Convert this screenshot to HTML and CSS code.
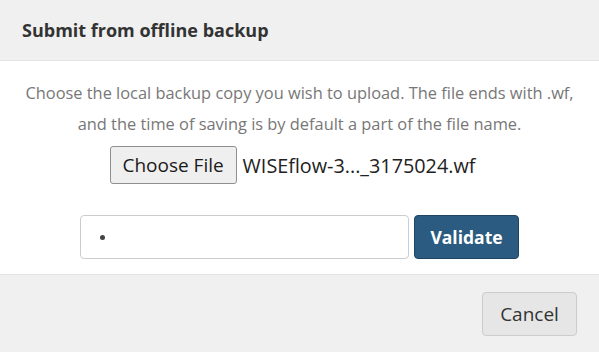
FILE: index.html
```html
<!DOCTYPE html>
<html>
<head>
<meta charset="utf-8">
<link rel="stylesheet" href="styles.css">
</head>
<body>
<div class="modal">
  <div class="modal-header">
    <h4 class="modal-title">Submit from offline backup</h4>
  </div>
  <div class="modal-body">
    <p class="intro">Choose the local backup copy you wish to upload. The file ends with .wf, and the time of saving is by default a part of the file name.</p>
    <div class="file-row">
      <span class="file-btn">Choose File</span>
      <span class="file-name">WISEflow-3..._3175024.wf</span>
    </div>
    <div class="pw-row">
      <div class="pw-input"><span class="dot"></span></div>
      <button class="btn-primary">Validate</button>
    </div>
  </div>
  <div class="modal-footer">
    <button class="btn-default">Cancel</button>
  </div>
</div>
</body>
</html>
```
FILE: styles.css
```css
html, body {
  margin: 0;
  padding: 0;
  background: #ffffff;
}
body {
  font-family: "Open Sans", "Liberation Sans", sans-serif;
  color: #333333;
}
.modal {
  width: 599px;
  height: 352px;
  display: flex;
  flex-direction: column;
}
.modal-header {
  height: 60px;
  background: #f0f0f0;
  border-bottom: 1px solid #e3e3e3;
  display: flex;
  align-items: center;
  padding: 0 22px;
}
.modal-title {
  margin: 0;
  font-size: 18px;
  font-weight: 700;
  color: #333333;
}
.modal-body {
  height: 197px;
  padding-top: 16px;
  display: flex;
  flex-direction: column;
  align-items: center;
}
.intro {
  margin: 0;
  width: 565px;
  text-align: center;
  font-size: 16.4px;
  line-height: 31px;
  color: #777777;
}
.file-row {
  margin-top: 7px;
  display: flex;
  align-items: center;
  gap: 6px;
  margin-right: 14px;
}
.file-btn {
  display: flex;
  align-items: center;
  justify-content: center;
  width: 125px;
  height: 36px;
  border: 1px solid #8f8f8f;
  border-radius: 3px;
  background: #efefef;
  font-size: 19px;
  color: #1a1a1a;
}
.file-name {
  font-size: 19.8px;
  color: #222222;
}
.pw-row {
  margin-top: 31px;
  display: flex;
  gap: 5px;
}
.pw-input {
  width: 329px;
  height: 44px;
  border: 1px solid #cccccc;
  border-radius: 4px;
  display: flex;
  align-items: center;
  padding-left: 19px;
  box-sizing: border-box;
}
.dot {
  width: 5px;
  height: 5px;
  border-radius: 50%;
  background: #444444;
}
.btn-primary {
  width: 105px;
  height: 44px;
  background: #2b5b80;
  border: 1px solid #1f4562;
  border-radius: 4px;
  color: #ffffff;
  font-family: inherit;
  font-size: 17.5px;
  font-weight: 700;
  padding: 0;
}
.modal-footer {
  flex: 1;
  background: #f0f0f0;
  border-top: 1px solid #e3e3e3;
  display: flex;
  justify-content: flex-end;
  align-items: flex-start;
  padding: 17px 22px 0 0;
}
.btn-default {
  width: 95px;
  height: 44px;
  background: #e6e6e6;
  border: 1px solid #cccccc;
  border-radius: 4px;
  color: #333333;
  font-family: inherit;
  font-size: 19px;
  padding: 0;
}
```
